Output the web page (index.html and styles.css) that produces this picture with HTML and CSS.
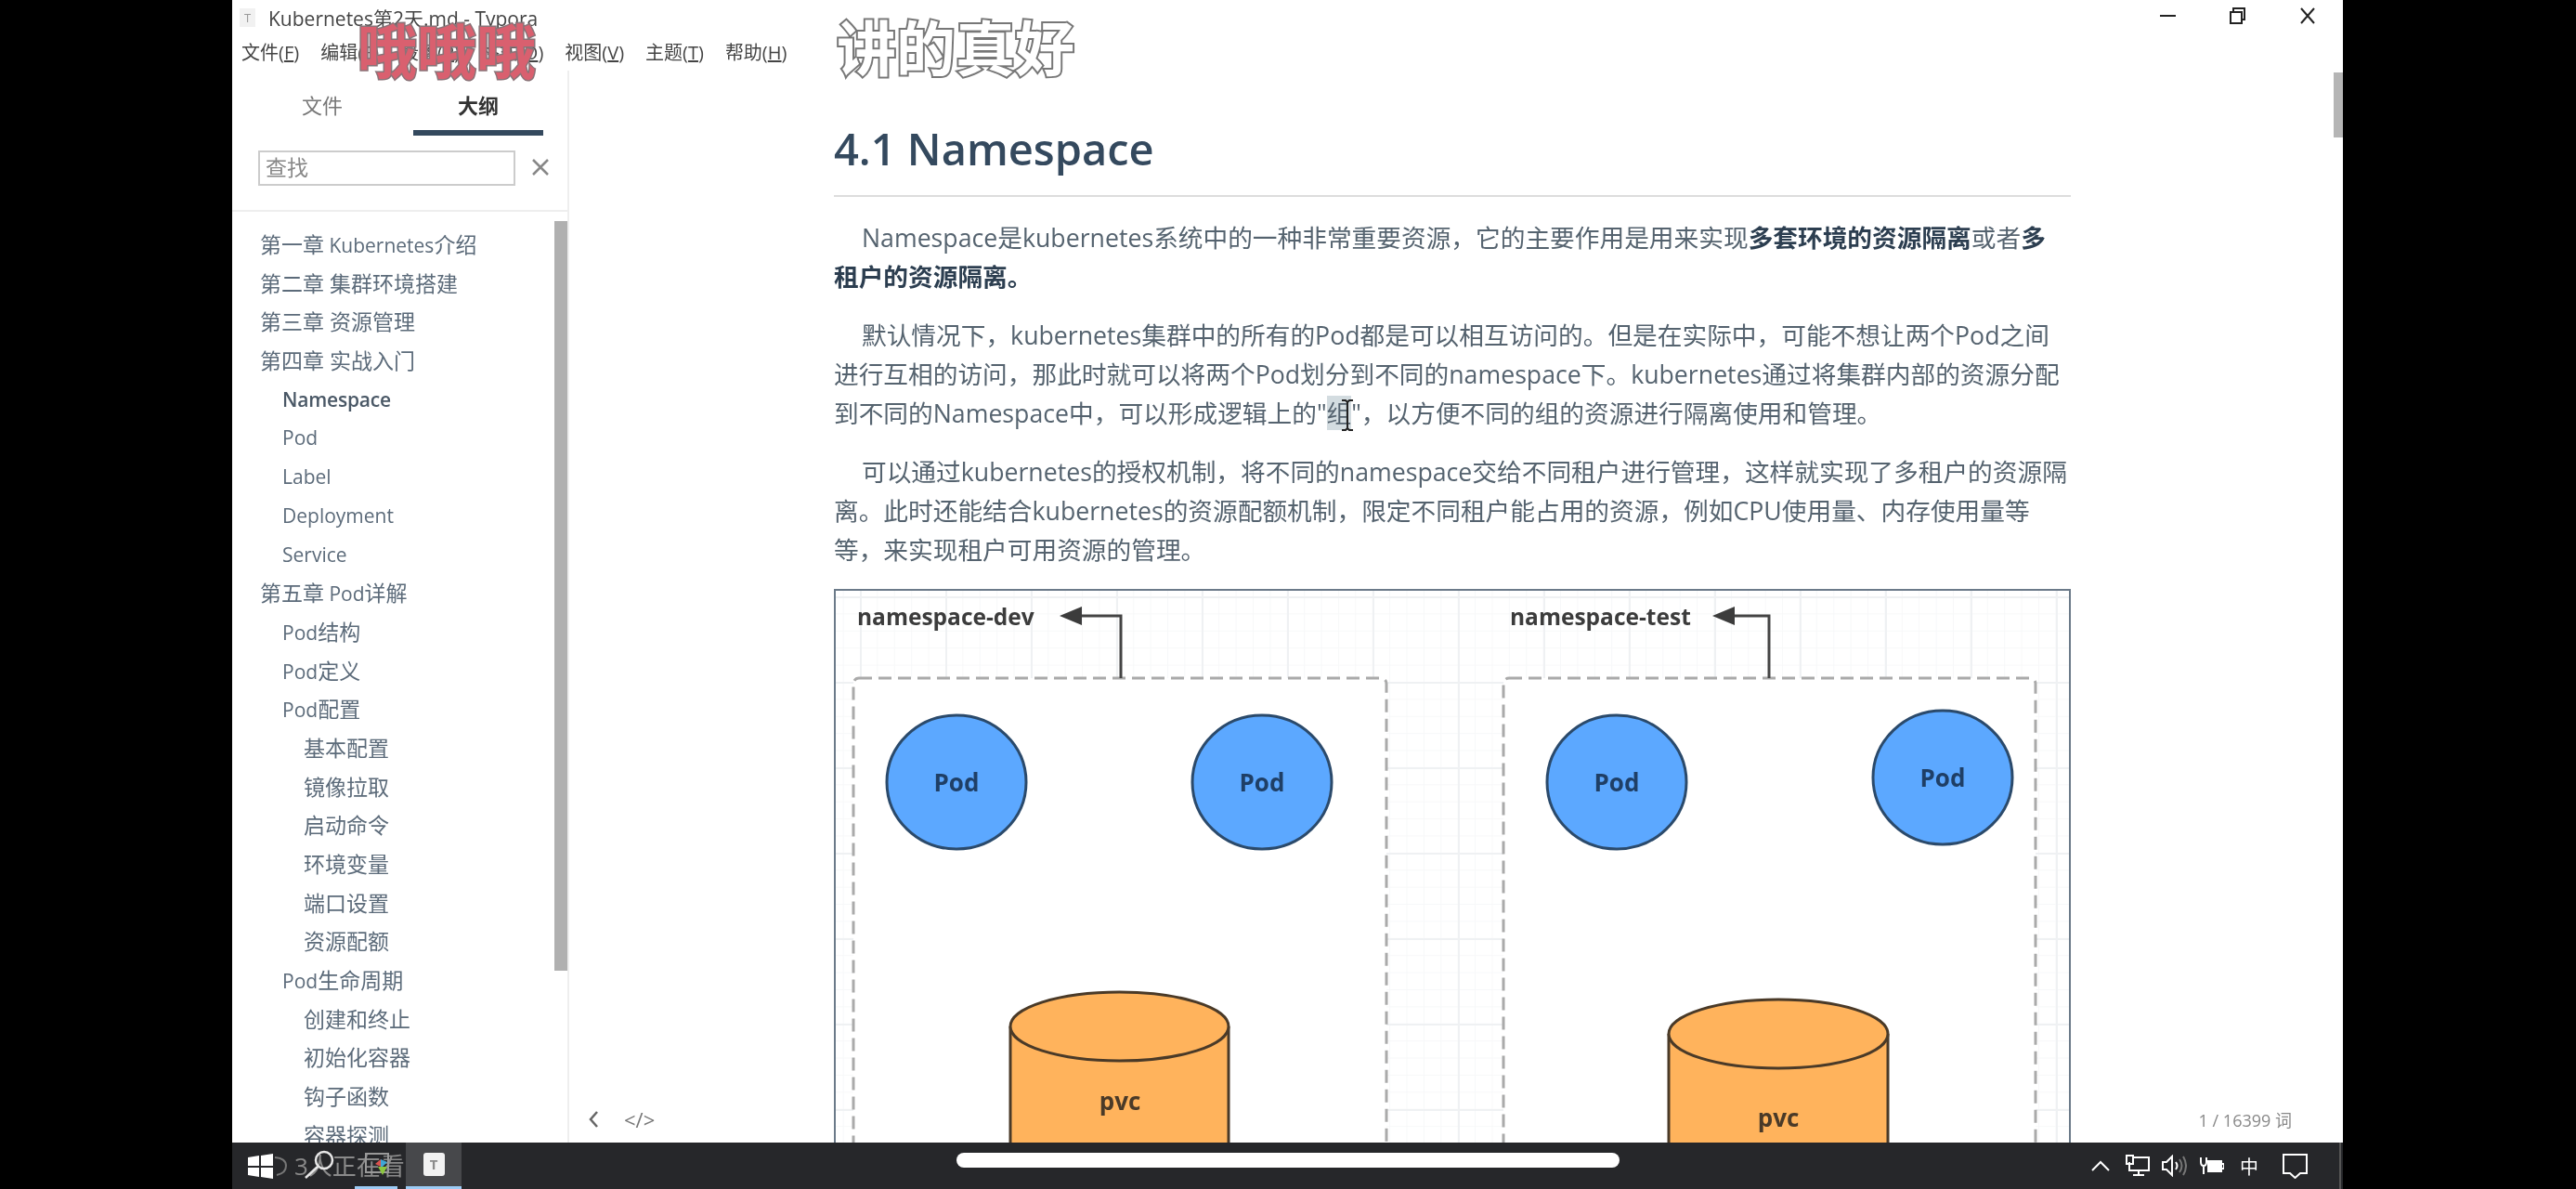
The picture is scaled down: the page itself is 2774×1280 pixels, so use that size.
FILE: index.html
```html
<!DOCTYPE html>
<html lang="zh">
<head>
	<meta charset="utf-8">
	<title>Kubernetes第2天.md - Typora</title>
	<link rel="stylesheet" href="styles.css">
</head>
<body>
	<section class="window">
		<header class="titlebar">
			<div class="titlerow">
				<span class="appicon">T</span>
				<span class="apptitle">Kubernetes第2天.md - Typora</span>
				<div class="winctl">
					<svg class="ctl-min" width="17" height="4" viewBox="0 0 17 4"><path d="M0 2H17" /></svg>
					<svg class="ctl-max" width="17" height="18" viewBox="0 0 17 18"><path d="M1 5H13V17H1ZM4 5V1H16V13H13" /></svg>
					<svg class="ctl-close" width="18" height="18" viewBox="0 0 18 18"><path d="M2 1L16 17M16 1L2 17" /></svg>
				</div>
			</div>
			<nav class="menubar">
				<span>文件(<u>F</u>)</span>
				<span>编辑(<u>E</u>)</span>
				<span>段落(<u>P</u>)</span>
				<span>格式(<u>O</u>)</span>
				<span>视图(<u>V</u>)</span>
				<span>主题(<u>T</u>)</span>
				<span>帮助(<u>H</u>)</span>
			</nav>
		</header>

		<div class="app">
			<aside class="sidebar">
				<div class="tabs">
					<span class="tab">文件</span>
					<span class="tab tab-active">大纲</span>
				</div>
				<div class="searchrow">
					<div class="searchbox">查找</div>
					<svg class="searchclose" width="20" height="20" viewBox="0 0 20 20"><path d="M2 2L18 18M18 2L2 18" /></svg>
				</div>
				<div class="outline">
					<ul>
						<li><i>第一章</i> Kubernetes<i>介绍</i></li>
						<li><i>第二章 集群环境搭建</i></li>
						<li><i>第三章 资源管理</i></li>
						<li><i>第四章 实战入门</i></li>
						<li class="l2 current">Namespace</li>
						<li class="l2">Pod</li>
						<li class="l2">Label</li>
						<li class="l2">Deployment</li>
						<li class="l2">Service</li>
						<li><i>第五章</i> Pod<i>详解</i></li>
						<li class="l2">Pod<i>结构</i></li>
						<li class="l2">Pod<i>定义</i></li>
						<li class="l2">Pod<i>配置</i></li>
						<li class="l3"><i>基本配置</i></li>
						<li class="l3"><i>镜像拉取</i></li>
						<li class="l3"><i>启动命令</i></li>
						<li class="l3"><i>环境变量</i></li>
						<li class="l3"><i>端口设置</i></li>
						<li class="l3"><i>资源配额</i></li>
						<li class="l2">Pod<i>生命周期</i></li>
						<li class="l3"><i>创建和终止</i></li>
						<li class="l3"><i>初始化容器</i></li>
						<li class="l3"><i>钩子函数</i></li>
						<li class="l3"><i>容器探测</i></li>
					</ul>
					<div class="outline-thumb"></div>
				</div>
			</aside>

			<main class="main">
				<article class="doc">
					<h2>4.1 Namespace</h2>
					<p>Namespace是kubernetes系统中的一种非常重要资源，它的主要作用是用来实现<strong>多套环境的资源隔离</strong>或者<strong>多</strong><br><strong>租户的资源隔离。</strong></p>
					<p>默认情况下，kubernetes集群中的所有的Pod都是可以相互访问的。但是在实际中，可能不想让两个Pod之间<br>进行互相的访问，那此时就可以将两个Pod划分到不同的namespace下。kubernetes通过将集群内部的资源分配<br>到不同的Namespace中，可以形成逻辑上的"<span class="sel">组</span>"，以方便不同的组的资源进行隔离使用和管理。</p>
					<p>可以通过kubernetes的授权机制，将不同的namespace交给不同租户进行管理，这样就实现了多租户的资源隔<br>离。此时还能结合kubernetes的资源配额机制，限定不同租户能占用的资源，例如CPU使用量、内存使用量等<br>等，来实现租户可用资源的管理。</p>
					<figure class="diagram">
						<svg width="1328" height="594" viewBox="900 636 1328 594">
							<!-- namespace-dev -->
							<rect class="ns" x="919" y="730" width="574" height="600" rx="6" />
							<text class="ns-label" x="923" y="673">namespace-dev</text>
							<path class="ns-line" d="M1207 730V663H1155" />
							<path class="ns-head" d="M1141 663L1165 653V673Z" />
							<ellipse class="pod" cx="1030" cy="842" rx="75" ry="72" />
							<text class="pod-label" x="1030" y="852">Pod</text>
							<ellipse class="pod" cx="1359" cy="842" rx="75" ry="72" />
							<text class="pod-label" x="1359" y="852">Pod</text>
							<path class="pvc" d="M1088 1105V1300H1323V1105" />
							<ellipse class="pvc" cx="1205.500" cy="1105" rx="117.500" ry="37" />
							<text class="pvc-label" x="1206" y="1195">pvc</text>

							<!-- namespace-test -->
							<rect class="ns" x="1619" y="730" width="573" height="600" rx="6" />
							<text class="ns-label" x="1626" y="673">namespace-test</text>
							<path class="ns-line" d="M1905 730V663H1858" />
							<path class="ns-head" d="M1844 663L1868 653V673Z" />
							<ellipse class="pod" cx="1741" cy="842" rx="75" ry="72" />
							<text class="pod-label" x="1741" y="852">Pod</text>
							<ellipse class="pod" cx="2092" cy="837" rx="75" ry="72" />
							<text class="pod-label" x="2092" y="847">Pod</text>
							<path class="pvc" d="M1797 1113V1300H2033V1113" />
							<ellipse class="pvc" cx="1915" cy="1113" rx="118" ry="37" />
							<text class="pvc-label" x="1915" y="1213">pvc</text>
						</svg>
					</figure>
				</article>
				<div class="main-thumb"></div>
				<footer class="statusbar">
					<svg class="back" width="12" height="20" viewBox="0 0 12 20"><path d="M10 2L3 10L10 18" /></svg>
					<span class="srcbtn">&lt;/&gt;</span>
					<span class="wordcount">1 / 16399 词</span>
				</footer>
			</main>
		</div>

		<footer class="taskbar">
			<svg class="winlogo" width="27" height="27" viewBox="0 0 27 27"><path d="M0 4L12 2V13H0ZM14 2L27 0V13H14ZM0 15H12V25L0 23ZM14 15H27V27L14 25Z" /></svg>
			<div class="tile"></div>
			<div class="tile tile-active"><span class="tile-t">T</span></div>
			<div class="tray">
				<svg class="ico ico-up" width="20" height="12" viewBox="0 0 20 12"><path d="M1 11L10 2L19 11" /></svg>
				<svg class="ico" width="26" height="24" viewBox="0 0 26 24"><path d="M7 3H25V17H4V8M14 17V22M8 22H20" /><rect x="1" y="1" width="7" height="9" /></svg>
				<svg class="ico" width="27" height="24" viewBox="0 0 27 24"><path d="M1 8H5L11 2V22L5 16H1ZM15 8Q18 12 15 16" /><path class="faint" d="M19 5Q24 12 19 19M23 2Q29 12 23 22" /></svg>
				<svg class="ico" width="27" height="22" viewBox="0 0 27 22"><path d="M2 2V7Q2 11 5 11Q8 11 8 7V2M5 11V20" /><rect class="solid" x="10" y="6" width="14" height="11" /><path d="M24 9H27V14H24" /></svg>
				<span class="ime">中</span>
				<svg class="ico" width="27" height="27" viewBox="0 0 27 27"><path d="M1 1H26V21H19L13.500 26L8 21H1Z" /></svg>
			</div>
		</footer>

		<!-- stuff floating over the recording -->
		<div class="danmu danmu-pink">哦哦哦</div>
		<div class="danmu danmu-white">讲的真好</div>
		<div class="viewers">3人正在看</div>
		<svg class="viewers-q" width="16" height="24" viewBox="0 0 16 24"><path d="M2 3Q14 4 14 12Q14 20 4 22" /></svg>
		<svg class="magnifier" width="36" height="32" viewBox="0 0 36 32"><circle cx="22" cy="11" r="9" /><path d="M15 18L2 30" /></svg>
		<svg class="colorlogo" width="30" height="26" viewBox="0 0 30 26">
			<rect class="logo-frame" x="1" y="1" width="24" height="20" />
			<path fill="#d9534f" d="M11 12L17 7V15Z" />
			<path fill="#3fa7d6" d="M17 7L24 10L19 15H17Z" />
			<path fill="#8cc63f" d="M14 15H24L19 24Z" />
		</svg>
		<svg class="ibeam" width="14" height="34" viewBox="0 0 14 34"><path d="M1 1H5L7 3L9 1H13M7 3V31M1 33H5L7 31L9 33H13" /></svg>
		<div class="pill"></div>
	</section>
</body>
</html>
```

FILE: styles.css
```css
html, body {
	margin: 0;
	height: 100%;
	background: #000;
	overflow: hidden;
}
body {
	font-family: "Open Sans", "Noto Sans CJK SC", sans-serif;
}
svg {
	display: block;
	flex: none;
}

.window {
	position: relative;
	display: flex;
	flex-direction: column;
	width: 2273px;
	height: 1280px;
	margin-left: 250px;
	background: #fff;
	filter: blur(0.7px);
}

/* title + menu */
.titlebar {
	flex: none;
	height: 76px;
	color: #333;
}
.titlerow {
	display: flex;
	align-items: center;
	height: 38px;
	padding-left: 8px;
}
.appicon {
	width: 17px;
	height: 20px;
	margin-right: 14px;
	background: #f1f1f1;
	color: #999;
	font-size: 13px;
	line-height: 20px;
	text-align: center;
}
.apptitle {
	font-size: 21px;
	color: #444;
}
.winctl {
	display: flex;
	align-items: center;
	gap: 58px;
	margin-left: auto;
	margin-top: -4px;
	padding-right: 29px;
}
.winctl path {
	fill: none;
	stroke: #222;
	stroke-width: 2;
}
.menubar {
	display: flex;
	gap: 23px;
	height: 38px;
	padding-left: 10px;
	font-size: 20px;
	line-height: 38px;
	color: #444;
}

/* sidebar */
.app {
	display: flex;
	flex: 1;
	min-height: 0;
}
.sidebar {
	display: flex;
	flex-direction: column;
	flex: none;
	width: 361px;
	border-right: 2px solid #eee;
}
.tabs {
	display: flex;
	flex: none;
	gap: 28px;
	height: 70px;
	padding-left: 27px;
	color: #777;
	font-size: 22px;
}
.tab {
	width: 140px;
	height: 64px;
	line-height: 74px;
	text-align: center;
}
.tab-active {
	border-bottom: 6px solid #34495e;
	color: #333;
	font-weight: 700;
}
.searchrow {
	display: flex;
	flex: none;
	align-items: flex-start;
	gap: 17px;
	height: 54px;
	padding: 16px 0 10px 28px;
	border-bottom: 2px solid #eee;
}
.searchbox {
	box-sizing: border-box;
	width: 277px;
	height: 38px;
	padding-left: 6px;
	border: 2px solid #ccc;
	color: #888;
	font-size: 23px;
	line-height: 33px;
}
.searchclose {
	margin-top: 8px;
}
.searchclose path {
	fill: none;
	stroke: #888;
	stroke-width: 2.5;
}
.outline {
	position: relative;
	flex: 1;
	min-height: 0;
	padding-top: 15px;
	overflow: hidden;
}
.outline ul {
	margin: 0;
	padding: 0 0 0 30px;
	list-style: none;
	color: #5c6b7a;
	font-size: 21px;
	line-height: 41.7px;
	white-space: nowrap;
}
.outline li {
	height: 41.7px;
}
.outline i {
	font-size: 23px;
	font-style: normal;
}
.outline .l2 {
	padding-left: 24px;
}
.outline .l3 {
	padding-left: 47px;
}
.outline .current {
	color: #4a5866;
	font-weight: 600;
	letter-spacing: -0.2px;
}
.outline-thumb {
	position: absolute;
	top: 10px;
	right: 0;
	width: 14px;
	height: 807px;
	background: #b0b0b0;
}

/* main document */
.main {
	position: relative;
	flex: 1;
	min-width: 0;
	overflow: hidden;
}
.doc {
	width: 1332px;
	margin-left: 285px;
	color: #55636f;
	font-size: 26.700px;
	line-height: 42px;
}
.doc h2 {
	margin: 0 0 23px;
	padding: 52px 0 18px;
	border-bottom: 2px solid #ddd;
	color: #34495e;
	font-size: 47px;
	font-weight: 600;
	line-height: 64px;
}
.doc p {
	margin: 0 0 21px;
	white-space: nowrap;
	text-indent: 30px;
}
.doc strong {
	color: #2c3e50;
	font-weight: 700;
}
.sel {
	background: #d3dce0;
}
.diagram {
	box-sizing: border-box;
	width: 1332px;
	height: 600px;
	margin: 0;
	border: 2px solid #6b7a89;
	background-color: #fff;
	background-image:
		linear-gradient(#eff1f3 2px, transparent 2px),
		linear-gradient(90deg, #eff1f3 2px, transparent 2px),
		linear-gradient(#f7f8f9 1px, transparent 1px),
		linear-gradient(90deg, #f7f8f9 1px, transparent 1px);
	background-size: 92px 92px, 92px 92px, 18.400px 18.400px, 18.400px 18.400px;
	background-position: 0 6px, 26px 0, 0 6px, 26px 0;
}
.ns {
	fill: #fff;
	stroke: #aaa;
	stroke-width: 3;
	stroke-dasharray: 14 7;
}
.ns-line {
	fill: none;
	stroke: #444;
	stroke-width: 3;
}
.ns-head {
	fill: #3c3c3c;
}
.ns-label {
	fill: #3c3c3c;
	font-size: 24.500px;
	font-weight: 700;
}
.pod {
	fill: #5ca8ff;
	stroke: #2b4a6b;
	stroke-width: 3;
}
.pod-label {
	fill: #1f3f66;
	font-size: 26px;
	font-weight: 700;
	text-anchor: middle;
}
.pvc {
	fill: #ffb35c;
	stroke: #4a3a28;
	stroke-width: 3;
}
.pvc-label {
	fill: #4a3a28;
	font-size: 26px;
	font-weight: 700;
	text-anchor: middle;
}
.main-thumb {
	position: absolute;
	top: 2px;
	right: 0;
	width: 10px;
	height: 70px;
	background: #b5b5b5;
}
.statusbar {
	position: absolute;
	right: 55px;
	bottom: 12px;
	left: 20px;
	display: flex;
	align-items: center;
	height: 26px;
	color: #888;
	font-size: 18px;
}
.back path {
	fill: none;
	stroke: #666;
	stroke-width: 2.5;
}
.srcbtn {
	margin-left: 27px;
	color: #777;
	font-size: 22px;
}
.wordcount {
	margin-left: auto;
}

/* windows taskbar */
.taskbar {
	position: relative;
	display: flex;
	flex: none;
	align-items: stretch;
	box-sizing: border-box;
	height: 50px;
	padding-left: 17px;
	background: #26272a;
	color: #eee;
}
.winlogo {
	align-self: center;
	margin-right: 88px;
}
.winlogo path {
	fill: #fff;
}
.tile {
	box-sizing: border-box;
	width: 46px;
	margin-right: 9px;
	border-bottom: 3px solid #9ccbf5;
}
.tile-active {
	display: flex;
	align-items: center;
	justify-content: center;
	width: 60px;
	margin-right: 0;
	background: #47484b;
}
.tile-t {
	width: 23px;
	height: 25px;
	border-radius: 3px;
	background: #f2f2f2;
	color: #8b8b8b;
	font-size: 15px;
	font-weight: 700;
	line-height: 25px;
	text-align: center;
}
.tray {
	display: flex;
	align-items: center;
	gap: 13px;
	margin-left: auto;
	margin-right: 2px;
	padding-right: 34px;
	border-right: 2px solid #555;
}
.ico path, .ico rect {
	fill: none;
	stroke: #fff;
	stroke-width: 2;
}
.ico .faint {
	stroke: #777;
}
.ico .solid {
	fill: #fff;
}
.ico-up {
	margin-right: 4px;
}
.ime {
	margin: 0 13px 0 4px;
	font-size: 20px;
	color: #fff;
}

/* overlays from the video */
.danmu {
	position: absolute;
	font-size: 64px;
	font-weight: 700;
	line-height: 70px;
	white-space: nowrap;
	paint-order: stroke fill;
}
.danmu-pink {
	top: 20px;
	left: 135px;
	color: #d9606f;
	-webkit-text-stroke: 3px #8a7378;
}
.danmu-white {
	top: 17px;
	left: 651px;
	color: #fff;
	-webkit-text-stroke: 4px #777;
}
.viewers {
	position: absolute;
	top: 1237px;
	left: 67px;
	color: #8a8a8a;
	font-size: 26px;
	line-height: 36px;
}
.viewers-q {
	position: absolute;
	top: 1243px;
	left: 44px;
}
.viewers-q path {
	fill: none;
	stroke: #777;
	stroke-width: 2;
}
.magnifier {
	position: absolute;
	top: 1238px;
	left: 77px;
}
.magnifier circle, .magnifier path {
	fill: none;
	stroke: #e8e8e8;
	stroke-width: 2.5;
}
.colorlogo {
	position: absolute;
	top: 1241px;
	left: 143px;
}
.logo-frame {
	fill: none;
	stroke: #999;
	stroke-width: 2;
}
.ibeam {
	position: absolute;
	top: 430px;
	left: 1194px;
}
.ibeam path {
	fill: none;
	stroke: #222;
	stroke-width: 2;
}
.pill {
	position: absolute;
	top: 1241px;
	left: 780px;
	width: 714px;
	height: 16px;
	border-radius: 8px;
	background: #fff;
}
```
